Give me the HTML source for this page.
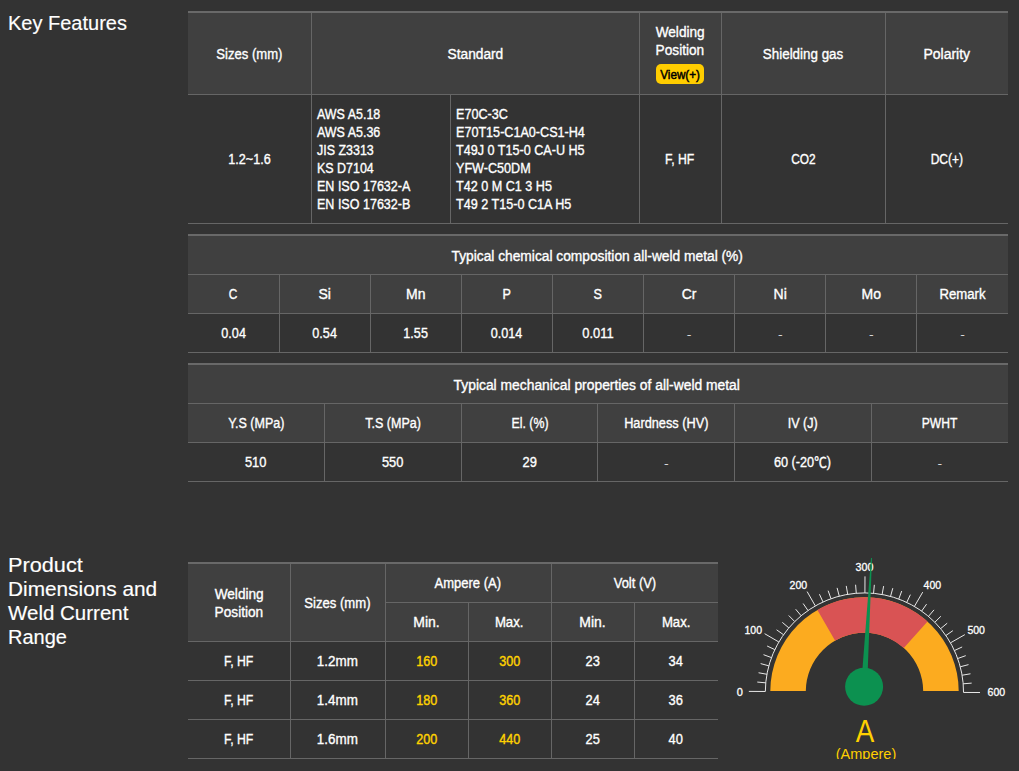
<!DOCTYPE html>
<html lang="en">
<head>
<meta charset="utf-8">
<title>Key Features</title>
<style>
html,body{margin:0;padding:0;}
body{width:1019px;height:771px;overflow:hidden;background:#333333;color:#fff;font-family:"Liberation Sans","Noto Sans CJK KR",sans-serif;font-size:14px;line-height:18px;position:relative;}
h2{position:absolute;left:8px;margin:0;font-weight:400;font-size:20px;line-height:24px;color:#fff;white-space:nowrap;-webkit-text-stroke:0.15px #fff;}
table{position:absolute;left:188px;border-collapse:collapse;table-layout:fixed;border-top:2px solid #696969;}
th,td{border:1px solid #666666;padding:10px 5px;text-align:center;vertical-align:middle;font-weight:400;font-size:14px;line-height:18px;-webkit-text-stroke:0.35px #fff;box-sizing:border-box;white-space:nowrap;}
th{background:#404040;}
td{background:#333333;}
tr>*:first-child{border-left:0;}
tr>*:last-child{border-right:0;}
td.l{text-align:left;}
.x{display:inline-block;transform:scaleX(var(--k));transform-origin:50% 50%;}
.xl{transform-origin:0 50%;}
#t1 th>.x{position:relative;top:1px;}
#t1 th.m>.x{top:0;}
.h{display:inline-block;position:relative;top:1px;-webkit-text-stroke:0;transform:scaleY(.7);}
.tt{position:relative;top:1px;left:-1px;}
.y{color:#ffd200;-webkit-text-stroke:0.4px #ffd200;}
.btn{display:inline-block;background:#ffcd00;color:#000;border-radius:5px;font-size:13px;line-height:21px;height:20px;width:48px;margin-top:5px;-webkit-text-stroke:0.5px #000;position:relative;top:0px;}
</style>
</head>
<body>
<h2 style="top:11px"><span class="x xl" style="--k:1">Key Features</span></h2>
<table id="t1" style="top:11px;width:820px">
<colgroup><col style="width:123px"><col style="width:139px"><col style="width:189px"><col style="width:82px"><col style="width:164px"><col style="width:123px"></colgroup>
<tr style="height:82px"><th><span class="x" style="--k:0.934">Sizes (mm)</span></th><th colspan="2"><span class="x" style="--k:0.98">Standard</span></th><th class="m" style="padding:0"><span class="x" style="--k:0.975">Welding</span><br><span class="x" style="--k:0.975">Position</span><br><span class="btn"><span class="x" style="--k:0.9">View(+)</span></span></th><th><span class="x" style="--k:0.956">Shielding gas</span></th><th><span class="x" style="--k:1">Polarity</span></th></tr>
<tr style="height:129px"><td><span class="x" style="--k:0.9">1.2~1.6</span></td><td class="l"><span class="x xl" style="--k:0.89">AWS A5.18</span><br><span class="x xl" style="--k:0.89">AWS A5.36</span><br><span class="x xl" style="--k:0.89">JIS Z3313</span><br><span class="x xl" style="--k:0.89">KS D7104</span><br><span class="x xl" style="--k:0.895">EN ISO 17632-A</span><br><span class="x xl" style="--k:0.895">EN ISO 17632-B</span></td><td class="l"><span class="x xl" style="--k:0.9">E70C-3C</span><br><span class="x xl" style="--k:0.9">E70T15-C1A0-CS1-H4</span><br><span class="x xl" style="--k:0.9">T49J 0 T15-0 CA-U H5</span><br><span class="x xl" style="--k:0.9">YFW-C50DM</span><br><span class="x xl" style="--k:0.9">T42 0 M C1 3 H5</span><br><span class="x xl" style="--k:0.9">T49 2 T15-0 C1A H5</span></td><td><span class="x" style="--k:0.875">F, HF</span></td><td><span class="x" style="--k:0.85">CO2</span></td><td><span class="x" style="--k:0.86">DC(+)</span></td></tr>
</table>

<table id="t2" style="top:234px;width:820px">
<tr style="height:39px"><th colspan="9"><span class="x tt" style="--k:0.983">Typical chemical composition all-weld metal (%)</span></th></tr>
<tr style="height:39px"><th><span class="x" style="--k:.85">C</span></th><th>Si</th><th>Mn</th><th><span class="x" style="--k:.9">P</span></th><th><span class="x" style="--k:.9">S</span></th><th>Cr</th><th>Ni</th><th>Mo</th><th><span class="x" style="--k:0.94">Remark</span></th></tr>
<tr style="height:39px"><td><span class="x" style="--k:0.9">0.04</span></td><td><span class="x" style="--k:0.9">0.54</span></td><td><span class="x" style="--k:0.9">1.55</span></td><td><span class="x" style="--k:0.9">0.014</span></td><td><span class="x" style="--k:0.92">0.011</span></td><td><span class="h">-</span></td><td><span class="h">-</span></td><td><span class="h">-</span></td><td><span class="h">-</span></td></tr>
</table>

<table id="t3" style="top:363px;width:820px">
<tr style="height:39px"><th colspan="6"><span class="x tt" style="--k:0.989">Typical mechanical properties of all-weld metal</span></th></tr>
<tr style="height:39px"><th><span class="x" style="--k:0.895">Y.S (MPa)</span></th><th><span class="x" style="--k:0.895">T.S (MPa)</span></th><th><span class="x" style="--k:0.88">El. (%)</span></th><th><span class="x" style="--k:0.91">Hardness (HV)</span></th><th><span class="x" style="--k:0.9">IV (J)</span></th><th><span class="x" style="--k:0.865">PWHT</span></th></tr>
<tr style="height:39px"><td><span class="x" style="--k:0.92">510</span></td><td><span class="x" style="--k:0.92">550</span></td><td><span class="x" style="--k:0.92">29</span></td><td><span class="h">-</span></td><td><span class="x" style="--k:0.905">60 (-20℃)</span></td><td><span class="h">-</span></td></tr>
</table>

<h2 style="top:553px"><span class="x xl" style="--k:1.085">Product</span><br><span class="x xl" style="--k:1.04">Dimensions and</span><br><span class="x xl" style="--k:1.025">Weld Current</span><br><span class="x xl" style="--k:1">Range</span></h2>
<table id="t4" style="top:562px;width:530px">
<colgroup><col style="width:102px"><col style="width:95px"><col style="width:83px"><col style="width:83px"><col style="width:83px"><col style="width:84px"></colgroup>
<tr style="height:39px"><th rowspan="2"><span class="x" style="--k:0.975">Welding</span><br><span class="x" style="--k:0.975">Position</span></th><th rowspan="2"><span class="x" style="--k:0.937">Sizes (mm)</span></th><th colspan="2"><span class="x" style="--k:0.93">Ampere (A)</span></th><th colspan="2"><span class="x" style="--k:0.925">Volt (V)</span></th></tr>
<tr style="height:39px"><th><span class="x" style="--k:1">Min.</span></th><th><span class="x" style="--k:0.94">Max.</span></th><th><span class="x" style="--k:1">Min.</span></th><th><span class="x" style="--k:0.94">Max.</span></th></tr>
<tr style="height:39px"><td><span class="x" style="--k:0.875">F, HF</span></td><td><span class="x" style="--k:0.96">1.2mm</span></td><td class="y"><span class="x" style="--k:0.9">160</span></td><td class="y"><span class="x" style="--k:0.9">300</span></td><td><span class="x" style="--k:0.92">23</span></td><td><span class="x" style="--k:0.92">34</span></td></tr>
<tr style="height:39px"><td><span class="x" style="--k:0.875">F, HF</span></td><td><span class="x" style="--k:0.96">1.4mm</span></td><td class="y"><span class="x" style="--k:0.9">180</span></td><td class="y"><span class="x" style="--k:0.9">360</span></td><td><span class="x" style="--k:0.92">24</span></td><td><span class="x" style="--k:0.92">36</span></td></tr>
<tr style="height:39px"><td><span class="x" style="--k:0.875">F, HF</span></td><td><span class="x" style="--k:0.96">1.6mm</span></td><td class="y"><span class="x" style="--k:0.9">200</span></td><td class="y"><span class="x" style="--k:0.9">440</span></td><td><span class="x" style="--k:0.92">25</span></td><td><span class="x" style="--k:0.92">40</span></td></tr>
</table>
<svg id="gauge" width="300" height="218" viewBox="719 541 300 218" style="position:absolute;left:719px;top:541px;overflow:hidden">
<defs><clipPath id="bclip"><rect x="719" y="541" width="300" height="150"/></clipPath></defs>
<g clip-path="url(#bclip)">
<path d="M770.30 691.50A94.2 94.2 0 0 1 958.70 691.50L923.20 691.50A58.7 58.7 0 0 0 805.80 691.50Z" fill="#fcab1f"/>
<path d="M817.40 609.92A94.2 94.2 0 0 1 927.53 621.50L903.78 647.88A58.7 58.7 0 0 0 835.15 640.66Z" fill="#d95354"/>
</g>
<path d="M765.33 691.48A99.1 99.1 0 0 1 963.53 692.44" fill="none" stroke="#e8e8e8" stroke-width="1"/>
<path d="M765.33 691.48L748.83 691.40M765.75 682.84L757.29 682.06M766.92 674.27L758.56 672.76M768.83 665.84L760.63 663.60M771.47 657.61L763.50 654.66M774.82 649.64L767.13 646.01M778.85 641.99L764.60 633.67M783.53 634.72L776.59 629.81M788.83 627.89L782.34 622.39M794.70 621.54L788.72 615.50M801.10 615.73L795.67 609.20M807.99 610.51L803.14 603.52M815.30 605.90L807.12 591.57M822.99 601.94L819.43 594.22M830.99 598.67L828.12 590.67M839.25 596.11L837.09 587.89M847.70 594.28L846.26 585.90M856.28 593.20L855.58 584.72M864.91 592.86L864.99 576.36M873.55 593.28L874.33 584.82M882.12 594.45L883.63 586.09M890.55 596.36L892.79 588.16M898.78 599.00L901.73 591.03M906.75 602.35L910.38 594.66M914.40 606.38L922.72 592.13M921.67 611.06L926.58 604.12M928.50 616.36L934.00 609.87M934.85 622.23L940.89 616.25M940.66 628.63L947.19 623.20M945.88 635.52L952.87 630.67M950.49 642.83L964.82 634.65M954.45 650.52L962.17 646.96M957.72 658.52L965.72 655.65M960.28 666.78L968.50 664.62M962.11 675.23L970.49 673.79M963.19 683.81L971.67 683.11M963.53 692.44L980.03 692.52" fill="none" stroke="#e8e8e8" stroke-width="1"/>
<g font-family="Liberation Sans, sans-serif" font-size="11" fill="#fff" stroke="#fff" stroke-width="0.3" text-anchor="middle">
<text x="739.9" y="696.2">0</text>
<text x="753.3" y="633.9" textLength="17.6" lengthAdjust="spacingAndGlyphs">100</text>
<text x="798.4" y="589.1" textLength="17.6" lengthAdjust="spacingAndGlyphs">200</text>
<text x="864.5" y="571.2" textLength="17.8" lengthAdjust="spacingAndGlyphs">300</text>
<text x="932.4" y="589.1" textLength="17.6" lengthAdjust="spacingAndGlyphs">400</text>
<text x="976.2" y="633.9" textLength="17.6" lengthAdjust="spacingAndGlyphs">500</text>
<text x="996.4" y="696.2" textLength="17.6" lengthAdjust="spacingAndGlyphs">600</text>
</g>
<path d="M867.10 686.87L872.00 558.03L871.00 557.97L861.10 686.53Z" fill="#0c9150"/>
<circle cx="864.1" cy="686.7" r="19" fill="#0c9150"/>
<text x="865" y="742.2" font-family="Liberation Sans, sans-serif" font-size="32" fill="#ffd000" text-anchor="middle" textLength="18.5" lengthAdjust="spacingAndGlyphs">A</text>
<text x="866" y="759.3" font-family="Liberation Sans, sans-serif" font-size="15" fill="#ffd000" text-anchor="middle" textLength="60.5" lengthAdjust="spacingAndGlyphs">(Ampere)</text>
</svg>
</body>
</html>
